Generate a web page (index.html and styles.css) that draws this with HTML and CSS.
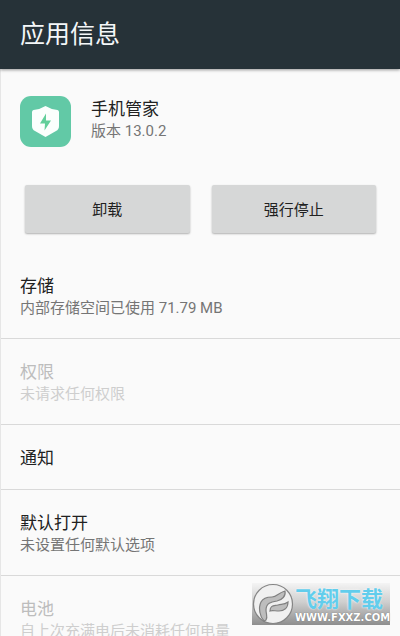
FILE: index.html
```html
<!DOCTYPE html>
<html lang="zh-CN">
<head>
<meta charset="utf-8">
<meta name="viewport" content="width=device-width, initial-scale=1">
<title>应用信息</title>
<link rel="stylesheet" href="styles.css">
</head>
<body>
<header class="bar"><h1>应用信息</h1></header>
<main class="page">
  <section class="app">
    <svg class="app-icon" viewBox="0 0 51 51" aria-hidden="true">
      <rect width="51" height="51" rx="11" fill="#62c9a6"/>
      <path d="M25.500 10 Q31 13.500 37.500 13.900 Q39 14.200 39 16 V30 Q39 33.500 36 35 L25.500 41 L15 35 Q12 33.500 12 30 V16 Q12 14.200 13.500 13.900 Q20 13.500 25.500 10Z" fill="#fbfffd"/>
      <path d="M26 17.500 L20 27.500 H25 L24.500 34.500 L31 24.500 H26Z" fill="#62cf9a"/>
    </svg>
    <div class="app-text">
      <h2 class="title">手机管家</h2>
      <p class="summary">版本 13.0.2</p>
    </div>
  </section>
  <div class="actions">
    <button type="button">卸载</button>
    <button type="button">强行停止</button>
  </div>
  <ul class="list">
    <li class="row"><h2 class="title">存储</h2><p class="summary">内部存储空间已使用 71.79 MB</p></li>
    <li class="row disabled"><h2 class="title">权限</h2><p class="summary">未请求任何权限</p></li>
    <li class="row single"><h2 class="title">通知</h2></li>
    <li class="row"><h2 class="title">默认打开</h2><p class="summary">未设置任何默认选项</p></li>
    <li class="row disabled"><h2 class="title">电池</h2><p class="summary">自上次充满电后未消耗任何电量</p></li>
  </ul>
</main>
<aside class="mark">
  <svg class="mark-logo" viewBox="0 0 42 42" aria-hidden="true">
    <circle cx="21" cy="21" r="19.500" fill="#f0f0f0" stroke="#858585" stroke-width="1.200"/>
    <path d="M12 38 C8 34 6 25 9 19 C11 15 16 14 20 14 C25 14 26 10 33 8 C34 13 30 17 25 18 C19 19 14 20 14 27 C14 31 16 34 14 37Z" fill="#bdbdbd" stroke="#808080" stroke-width="1.200"/>
    <path d="M18 28 C18 22 22 23 26 22 C30 21 32 22 36 19 C36 25 32 28 27 28 C23 28 20 27 18 28Z" fill="#bdbdbd" stroke="#808080" stroke-width="1.200"/>
  </svg>
  <div class="mark-text">
    <span class="mark-name">飞翔下载</span>
    <span class="mark-url">WWW.FXXZ.COM</span>
  </div>
</aside>
</body>
</html>
```
FILE: styles.css
```css
* {
  box-sizing: border-box;
}

html {
  height: 100%;
  overflow: hidden;
}

body {
  position: relative;
  height: 100%;
  margin: 0;
  overflow: hidden;
  background: #fafafa;
  color: #212121;
  font-family: Roboto, "Noto Sans CJK SC", sans-serif;
}

h1,
h2,
p,
ul {
  margin: 0;
  padding: 0;
  font-weight: 400;
}

.bar {
  position: relative;
  padding: 17px 20px 16px;
  background: #263238;
  box-shadow: 0 1px 3px rgba(0, 0, 0, 0.4);
  color: #f4f7f8;
}

.bar h1 {
  font-size: 25px;
  line-height: 36px;
}

.page {
  border-left: 1px solid #e6e6e6;
}

.app {
  display: flex;
  gap: 20px;
  padding: 27px 19px 0;
}

.app-icon {
  width: 51px;
  height: 51px;
}

.app-text {
  padding-top: 2px;
}

.title {
  font-size: 17px;
  line-height: 22px;
}

.summary {
  color: #757575;
  font-size: 15px;
  line-height: 22px;
}

.actions {
  display: flex;
  gap: 22px;
  padding: 38px 24px 20px;
}

.actions button {
  flex: 1;
  height: 48px;
  padding: 0 0 2px;
  border: 0;
  border-radius: 2px;
  background: #d6d7d7;
  box-shadow: 0 1px 2px rgba(0, 0, 0, 0.3);
  color: #212121;
  font: inherit;
  font-size: 15px;
}

.list {
  list-style: none;
}

.row {
  padding: 22px 19px 19px;
  border-bottom: 1px solid #d9d9d9;
}

.single {
  padding-bottom: 20px;
}

.disabled .title {
  color: #bdbdbd;
}

.disabled .summary {
  color: #cecece;
}

.mark {
  position: absolute;
  right: 10px;
  bottom: 11px;
  display: flex;
  width: 138px;
  height: 42px;
  background: linear-gradient(#f4f4f4, #cfcfcf 45%, #8e8e8e);
}

.mark-logo {
  flex: none;
  width: 42px;
  height: 42px;
}

.mark-text {
  display: flex;
  flex-direction: column;
  padding: 4px 0 0 1px;
  white-space: nowrap;
}

.mark-name {
  color: #62cdec;
  font-size: 22px;
  font-weight: 700;
  line-height: 26px;
  text-shadow: 0 0 2px #ffffff;
}

.mark-url {
  color: #ffffff;
  font-family: "DejaVu Sans", sans-serif;
  font-size: 10px;
  font-weight: 700;
  line-height: 10px;
  text-shadow: 0 0 1px #666666;
}
```
